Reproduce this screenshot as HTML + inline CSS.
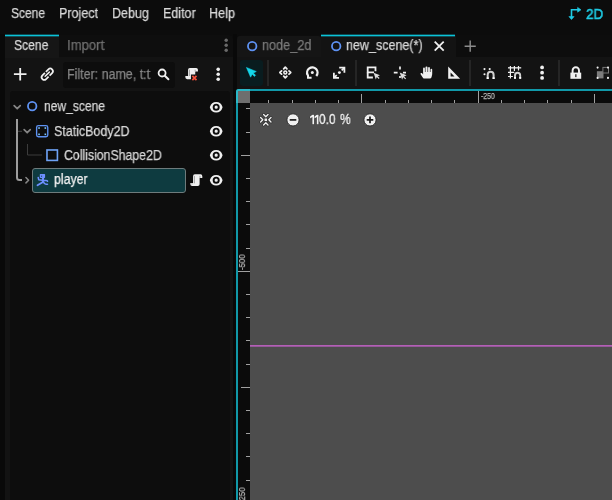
<!DOCTYPE html>
<html>
<head>
<meta charset="utf-8">
<title>Godot</title>
<style>
html,body{margin:0;padding:0;}
body{width:612px;height:500px;overflow:hidden;background:#0c0c0c;font-family:"Liberation Sans",sans-serif;position:relative;color:#dcdcdc;}
.a{position:absolute;}
.t{position:absolute;white-space:nowrap;will-change:transform;-webkit-text-stroke:.25px currentColor;font-size:14px;line-height:16px;color:#d8d8d8;transform-origin:0 50%;}
svg{position:absolute;overflow:visible;}
.sep{position:absolute;width:2px;background:#252525;top:60px;height:26px;}
.tick{position:absolute;background:#a0a0a0;}
</style>
</head>
<body>
<!-- menu bar -->
<div class="t" id="m1" style="left:10.5px;top:5px;transform:scaleX(0.857);">Scene</div>
<div class="t" id="m2" style="left:58.7px;top:5px;transform:scaleX(0.895);">Project</div>
<div class="t" id="m3" style="left:112.3px;top:5px;transform:scaleX(0.893);">Debug</div>
<div class="t" id="m4" style="left:162.5px;top:5px;transform:scaleX(0.894);">Editor</div>
<div class="t" id="m5" style="left:208.6px;top:5px;transform:scaleX(0.904);">Help</div>
<svg style="left:566px;top:5px;" width="18" height="18" viewBox="566 5 18 18"><path d="M571.5 17v-7.2h6.5" fill="none" stroke="#1fcbe4" stroke-width="1.6"/><path d="M577.6 7.4l3.4 2.4-3.4 2.4z" fill="#1fcbe4" stroke="#1fcbe4" stroke-width=".6" stroke-linejoin="round"/><path d="M568.9 16.6l2.6 3 2.6-3z" fill="#1fcbe4" stroke="#1fcbe4" stroke-width=".6" stroke-linejoin="round"/></svg>
<div class="t" id="m6" style="left:586px;top:5.5px;transform:scaleX(0.93);color:#1fcbe4;font-size:14.5px;-webkit-text-stroke:.55px #1fcbe4;">2D</div>
<!-- left dock -->
<div class="a" style="left:0px;top:34px;width:5px;height:466px;background:#090909;"></div>
<div class="a" style="left:233px;top:34px;width:4px;height:466px;background:#090909;"></div>
<div class="a" style="left:5px;top:35px;width:228px;height:22px;background:#0e0e0e;border-radius:4px 4px 0 0;"></div>
<div class="a" style="left:5px;top:56.5px;width:228px;height:444px;background:#131313;"></div>
<div class="a" style="left:5px;top:35px;width:54px;height:23px;background:#161616;border-radius:2px 2px 0 0;"></div>
<div class="a" style="left:5px;top:34px;width:54px;height:3px;background:#0bbfd4;opacity:.35;"></div>
<div class="a" style="left:5px;top:35px;width:54px;height:1px;background:#0bc3d8;"></div>
<div class="t" id="d1" style="left:14px;top:37px;transform:scaleX(0.865);">Scene</div>
<div class="t" id="d2" style="left:66.7px;top:37px;transform:scaleX(0.938);color:#6f6f6f;">Import</div>
<svg style="left:218.90px;top:38.30px;" width="14.4" height="14.4" viewBox="0 0 16 16"><g fill="#6a6a6a"><circle cx="8" cy="2.5" r="1.9"/><circle cx="8" cy="8" r="1.9"/><circle cx="8" cy="13.6" r="1.9"/></g></svg>
<div class="a" style="left:62.5px;top:61.5px;width:112.5px;height:26px;background:#0d0d0d;border-radius:3px;"></div>
<div class="t" id="f1" style="left:67.4px;top:66px;transform:scaleX(0.889);color:#858585;">Filter: name, t:t</div>
<div class="a" style="left:9.5px;top:91px;width:220px;height:420px;background:#0d0d0d;border-radius:3px;"></div>
<div class="a" style="left:32px;top:168px;width:152px;height:23px;background:#0e3b40;border:1px solid #6e7b7c;border-radius:3px;"></div>
<div class="t" id="n1" style="left:43.9px;top:98px;transform:scaleX(0.862);">new_scene</div>
<div class="t" id="n2" style="left:54px;top:122.5px;transform:scaleX(0.889);">StaticBody2D</div>
<div class="t" id="n3" style="left:64.3px;top:147px;transform:scaleX(0.878);">CollisionShape2D</div>
<div class="t" id="n4" style="left:54px;top:171px;transform:scaleX(0.881);color:#f2f2f2;">player</div>
<svg style="left:12.80px;top:67.00px;" width="14.4" height="14.4" viewBox="0 0 16 16"><path d="M8 1v14M1 8h14" stroke="#f0f0f0" stroke-width="2" fill="none"/></svg>
<svg style="left:40px;top:66px;" width="16" height="16" viewBox="40 66 16 16"><g transform="rotate(-45 47.25 74.2)"><rect x="40.4" y="71.6" width="13.7" height="5.2" rx="2.6" fill="none" stroke="#f0f0f0" stroke-width="1.7"/><path d="M47.25 70v8.4" stroke="#141414" stroke-width="1.3"/><path d="M44.3 74.2h5.9" stroke="#f0f0f0" stroke-width="1.5" stroke-linecap="round"/></g></svg>
<svg style="left:156px;top:66px;" width="16" height="16" viewBox="156 66 16 16"><circle cx="162.1" cy="73" r="3.5" fill="none" stroke="#f0f0f0" stroke-width="1.8"/><path d="M164.8 75.7l3.6 3.6" stroke="#f0f0f0" stroke-width="2" stroke-linecap="round"/></svg>
<svg style="left:184.20px;top:66.80px;" width="14.4" height="14.4" viewBox="0 0 16 16"><path fill="#f0f0f0" d="M6.5 1a2 2 0 0 0-2 2v7h-3v1.5a2 2 0 0 0 2 2h4.2V8.2h4.8V5h3V3a2 2 0 0 0-2-2z"/><path d="M6 3v7M12.4 3v2" stroke="#9a9a9a" stroke-width="1" fill="none"/><path d="M9.3 9.9l4.6 4.6M13.9 9.9l-4.6 4.6" stroke="#f2513c" stroke-width="2" fill="none"/></svg>
<svg style="left:210.60px;top:67.00px;" width="14.4" height="14.4" viewBox="0 0 16 16"><g fill="#f0f0f0"><circle cx="8" cy="2.6" r="2"/><circle cx="8" cy="8" r="2"/><circle cx="8" cy="13.6" r="2"/></g></svg>
<svg style="left:0px;top:90px;" width="240" height="110" viewBox="0 90 240 110"><path d="M17 119v58.5a2.5 2.5 0 0 0 2.5 2.5h2.5" fill="none" stroke="#9c9c9c" stroke-width="2"/><path d="M18 131.3h4" stroke="#454545" stroke-width="1" fill="none"/><path d="M27.5 144v11h14.5" fill="none" stroke="#3c3c3c" stroke-width="1"/></svg>
<svg style="left:9.60px;top:99.60px;" width="14.4" height="14.4" viewBox="0 0 16 16"><path d="M4.6 6.3l3.4 3.4 3.4-3.4" fill="none" stroke="#858585" stroke-width="1.9" stroke-linecap="round" stroke-linejoin="round"/></svg>
<svg style="left:19.70px;top:124.10px;" width="14.4" height="14.4" viewBox="0 0 16 16"><path d="M4.6 6.3l3.4 3.4 3.4-3.4" fill="none" stroke="#858585" stroke-width="1.9" stroke-linecap="round" stroke-linejoin="round"/></svg>
<svg style="left:20.00px;top:172.80px;" width="14.4" height="14.4" viewBox="0 0 16 16"><path d="M6.6 5l3 3-3 3" fill="none" stroke="#858585" stroke-width="1.7" stroke-linecap="round" stroke-linejoin="round"/></svg>
<svg style="left:24.80px;top:99.30px;" width="14.4" height="14.4" viewBox="0 0 16 16"><circle cx="8" cy="8" r="4.7" fill="none" stroke="#5e92f3" stroke-width="2"/></svg>
<svg style="left:35.00px;top:123.80px;" width="14.4" height="14.4" viewBox="0 0 16 16"><rect x="1.8" y="1.8" width="12.4" height="12.4" rx="2" fill="none" stroke="#5e92f3" stroke-width="1.5"/><g fill="#7cc4ff"><rect x="3.6" y="3.6" width="1.8" height="1.8"/><rect x="10.6" y="3.6" width="1.8" height="1.8"/><rect x="3.6" y="10.6" width="1.8" height="1.8"/><rect x="10.6" y="10.6" width="1.8" height="1.8"/></g></svg>
<svg style="left:45.20px;top:147.80px;" width="14.4" height="14.4" viewBox="0 0 16 16"><rect x="2.2" y="2.2" width="11.6" height="11.6" fill="none" stroke="#6ea2f5" stroke-width="1.8"/></svg>
<svg style="left:36px;top:172px;" width="14" height="16" viewBox="36 172 14 16"><rect x="39.8" y="174.1" width="5.3" height="3.8" rx=".6" fill="#6e90ff"/><rect x="41.1" y="175.7" width="1" height="1" fill="#0b3c41"/><g fill="none" stroke="#6e90ff" stroke-linecap="round" stroke-linejoin="round"><path d="M43 178v3.8" stroke-width="2.2"/><path d="M42.4 180.2l-3.7-.5-.5-2.2" stroke-width="1.5"/><path d="M43.6 180.5h2.2q1.6 0 1.8 .7" stroke-width="1.5"/><path d="M43.6 182q.5 2.2 2.4 2.3h1.5" stroke-width="1.5"/><path d="M42.6 182.2l-5.1 3.1" stroke-width="1.8"/></g></svg>
<svg style="left:208.90px;top:99.80px;" width="14.4" height="14.4" viewBox="0 0 16 16"><path fill="#f0f0f0" d="M8 2.2a7.3 7.3 0 0 0-6.9 5.3 1 1 0 0 0 0 1A7.3 7.3 0 0 0 8 13.8a7.3 7.3 0 0 0 6.9-5.3 1 1 0 0 0 0-1A7.3 7.3 0 0 0 8 2.2zm0 1.9a3.9 3.9 0 0 1 0 7.8 3.9 3.9 0 0 1 0-7.8zm0 2.1a1.8 1.8 0 0 0 0 3.6 1.8 1.8 0 0 0 0-3.6z"/></svg>
<svg style="left:208.90px;top:124.00px;" width="14.4" height="14.4" viewBox="0 0 16 16"><path fill="#f0f0f0" d="M8 2.2a7.3 7.3 0 0 0-6.9 5.3 1 1 0 0 0 0 1A7.3 7.3 0 0 0 8 13.8a7.3 7.3 0 0 0 6.9-5.3 1 1 0 0 0 0-1A7.3 7.3 0 0 0 8 2.2zm0 1.9a3.9 3.9 0 0 1 0 7.8 3.9 3.9 0 0 1 0-7.8zm0 2.1a1.8 1.8 0 0 0 0 3.6 1.8 1.8 0 0 0 0-3.6z"/></svg>
<svg style="left:208.90px;top:148.20px;" width="14.4" height="14.4" viewBox="0 0 16 16"><path fill="#f0f0f0" d="M8 2.2a7.3 7.3 0 0 0-6.9 5.3 1 1 0 0 0 0 1A7.3 7.3 0 0 0 8 13.8a7.3 7.3 0 0 0 6.9-5.3 1 1 0 0 0 0-1A7.3 7.3 0 0 0 8 2.2zm0 1.9a3.9 3.9 0 0 1 0 7.8 3.9 3.9 0 0 1 0-7.8zm0 2.1a1.8 1.8 0 0 0 0 3.6 1.8 1.8 0 0 0 0-3.6z"/></svg>
<svg style="left:208.90px;top:172.70px;" width="14.4" height="14.4" viewBox="0 0 16 16"><path fill="#f0f0f0" d="M8 2.2a7.3 7.3 0 0 0-6.9 5.3 1 1 0 0 0 0 1A7.3 7.3 0 0 0 8 13.8a7.3 7.3 0 0 0 6.9-5.3 1 1 0 0 0 0-1A7.3 7.3 0 0 0 8 2.2zm0 1.9a3.9 3.9 0 0 1 0 7.8 3.9 3.9 0 0 1 0-7.8zm0 2.1a1.8 1.8 0 0 0 0 3.6 1.8 1.8 0 0 0 0-3.6z"/></svg>
<svg style="left:188.80px;top:172.80px;" width="14.4" height="14.4" viewBox="0 0 16 16"><path fill="#f0f0f0" d="M6.5 1.5a2 2 0 0 0-2 2v7.5h-3v1.5a2 2 0 0 0 2 2h6.3a2 2 0 0 0 2-2V5.5h3V3.5a2 2 0 0 0-2-2z"/><path d="M6 3.3v8.2M12.2 3.2v2.3M3.3 11.3v1.4" stroke="#9a9a9a" stroke-width="1" fill="none"/></svg>
<!-- scene tabs -->
<div class="a" style="left:236.5px;top:35px;width:380px;height:22px;background:#0d0d0d;border-radius:4px 0 0 0;"></div>
<div class="a" style="left:236.5px;top:56.5px;width:380px;height:34px;background:#131313;"></div>
<div class="a" style="left:237px;top:36px;width:83.5px;height:20.5px;background:#151515;border-radius:3px 3px 0 0;"></div>
<div class="a" style="left:320.5px;top:35px;width:135px;height:22px;background:#131313;"></div>
<div class="a" style="left:320.5px;top:34px;width:134.5px;height:3px;background:#0bbfd4;opacity:.35;"></div>
<div class="a" style="left:320.5px;top:35px;width:134.5px;height:1px;background:#0bc3d8;"></div>
<div class="t" id="s1" style="left:262px;top:37px;transform:scaleX(0.906);color:#7a7a7a;">node_2d</div>
<div class="t" id="s2" style="left:345.9px;top:37px;transform:scaleX(0.895);">new_scene(*)</div>
<svg style="left:245.30px;top:38.80px;" width="14.4" height="14.4" viewBox="0 0 16 16"><circle cx="8" cy="8" r="4.7" fill="none" stroke="#5e92f3" stroke-width="2"/></svg>
<svg style="left:329.00px;top:38.80px;" width="14.4" height="14.4" viewBox="0 0 16 16"><circle cx="8" cy="8" r="4.7" fill="none" stroke="#5e92f3" stroke-width="2"/></svg>
<svg style="left:432.10px;top:38.80px;" width="14.4" height="14.4" viewBox="0 0 16 16"><path d="M3 3l10 10M13 3L3 13" stroke="#f0f0f0" stroke-width="2" fill="none"/></svg>
<svg style="left:463.00px;top:38.90px;" width="14.4" height="14.4" viewBox="0 0 16 16"><path d="M8 1.8v12.4M1.8 8h12.4" stroke="#8c8c8c" stroke-width="1.6" fill="none"/></svg>
<!-- toolbar -->
<div class="a" style="left:240px;top:60px;width:23px;height:25.5px;background:#091c1f;border-radius:3px;"></div>
<div class="sep" style="left:267px;"></div>
<div class="sep" style="left:354.7px;"></div>
<div class="sep" style="left:469.4px;"></div>
<div class="sep" style="left:557.6px;"></div>
<svg style="left:236px;top:58px;" width="376" height="32" viewBox="236 58 376 32"><path fill="#14d6ea" stroke="#14d6ea" stroke-width=".5" stroke-linejoin="round" d="M246.4 67.4l9.9 4.1-2.9 1.6 2.2 2.2-1.2 1.2-2.2-2.2-1.6 2.9z"/><g fill="none" stroke="#f0f0f0" stroke-width="1.8" stroke-linecap="round" stroke-linejoin="round"><path d="M283.70 68.80l1.6-1.7 1.6 1.7"/><path d="M283.70 76.20l1.6 1.7 1.6-1.7"/><path d="M281.60 70.90l-1.7 1.6 1.7 1.6"/><path d="M289.00 70.90l1.7 1.6-1.7 1.6"/></g><circle cx="285.3" cy="72.5" r="1.45" fill="none" stroke="#f0f0f0" stroke-width="1.6"/><path d="M316.28 75.94A5.2 5.2 0 1 0 307.71 75.04" fill="none" stroke="#f0f0f0" stroke-width="2.3" stroke-linecap="butt"/><path d="M308 74.6v3.1h3.6" fill="none" stroke="#f0f0f0" stroke-width="2"/><circle cx="312.3" cy="72.6" r="1.5" fill="#f0f0f0"/><g fill="none" stroke="#f0f0f0" stroke-width="1.8" stroke-linejoin="miter"><path d="M339.2 67.7h5.2v5.1"/><path d="M333.9 72.8v5.1h5.1"/><path d="M344.2 67.9l-2.5 2.5M334.1 77.7l2.6-2.6" stroke-width="1.7"/></g><circle cx="339.4" cy="72.6" r="1.45" fill="#f0f0f0"/><g fill="none" stroke="#f0f0f0" stroke-width="1.8"><path d="M374 72.4h-6.3v-5h7.8v3.8"/><path d="M367.7 72.4v5.1h5.2"/></g><path fill="#dcdcdc" d="M373.6 72.8l6.4 2.4-2.3 1 1.9 1.9-.9.9-1.9-1.9-1 2.3z"/><g stroke="#f0f0f0" stroke-width="1.7" fill="none"><path d="M400 66.6v2.8M393.8 72.6h3.8M403 72.6h3M400 76v2"/></g><path fill="#dcdcdc" d="M399.7 72.6l6.9 2.7-2.5 1.1 2 2-.9.9-2-2-1.1 2.5z"/><path fill="#f0f0f0" d="M426.4 66.6a.9.9 0 0 0-.9.9v4.4h-.6v-3.5a.9.9 0 0 0-1.8 0v6.2l-.9-1.3a.95.95 0 0 0-1.6 1l2.3 3.4a1.9 1.9 0 0 0 1.6.9h5.2a1.9 1.9 0 0 0 1.8-1.4l.7-3v-4.6a.85.85 0 0 0-1.7 0v2.3h-.6v-4a.9.9 0 0 0-1.8 0v4h-.6v-4.4a.9.9 0 0 0-.9-.9z"/><path fill="#f0f0f0" fill-rule="evenodd" d="M448.2 66.6v12.2h11.9zM450.6 72.6l3.9 4h-3.9z"/><g fill="#f0f0f0"><circle cx="484.5" cy="69.1" r="1.05"/><circle cx="489.7" cy="69.1" r="1.05"/><circle cx="484.5" cy="74.3" r="1.05"/></g><path d="M487.7 79v-4.2a2.95 2.95 0 0 1 5.9 0V79" fill="none" stroke="#d0d0d0" stroke-width="2"/><path d="M486.7 78.2h2M492.6 78.2h2" stroke="#ffffff" stroke-width="1.7"/><path d="M508 67.8h13.2" stroke="#c4c4c4" stroke-width="1.6" fill="none"/><g stroke="#f0f0f0" stroke-width="1.2" fill="none"><path d="M510.4 66v12.6M514.4 66v5M518.5 66v4.4M508 72.3h6.3M508 76.5h4.9"/></g><path d="M515 78.7v-3.3a2.6 2.6 0 0 1 5.2 0v3.3" fill="none" stroke="#d0d0d0" stroke-width="1.9"/><path d="M514.05 77.9h1.9M519.25 77.9h1.9" stroke="#ffffff" stroke-width="1.7"/><g fill="#f0f0f0"><circle cx="542.1" cy="67.4" r="1.9"/><circle cx="542.1" cy="72.7" r="1.9"/><circle cx="542.1" cy="77.9" r="1.9"/></g><path d="M572.6 73v-2.6a3.2 3.2 0 0 1 6.4 0V73" fill="none" stroke="#f0f0f0" stroke-width="1.9"/><rect x="570.4" y="72.6" width="10.8" height="6.2" fill="#f0f0f0"/><rect x="575.2" y="74.2" width="1.3" height="2.9" fill="#222"/><rect x="596.9" y="71.2" width="6.6" height="7.2" fill="#7d7d7d"/><rect x="602.9" y="67.4" width="5.6" height="5.6" fill="#161616" stroke="#777" stroke-width="1"/><g fill="#f0f0f0"><circle cx="597.6" cy="67.6" r="1.05"/><circle cx="608" cy="67.6" r="1.05"/><circle cx="597.6" cy="77.9" r="1.05"/><circle cx="608" cy="77.9" r="1.05"/></g></svg>
<!-- viewport -->
<div class="a" style="left:236px;top:89px;width:380px;height:420px;background:#0b0b0b;border:2px solid #1199a9;border-radius:3px 0 0 0;box-sizing:border-box;"></div>
<div class="a" style="left:236px;top:89px;width:14px;height:14px;background:transparent;border:2px solid #2ab8c8;border-right:none;border-bottom:none;border-radius:3px 0 0 0;box-sizing:border-box;"></div>
<div class="a" style="left:238px;top:91px;width:12px;height:12px;background:#6e6e6e;"></div>
<div class="a" style="left:250px;top:103px;width:362px;height:397px;background:#4d4d4d;"></div>
<div class="a" style="left:250px;top:345px;width:362px;height:1px;background:#b45fb7;"></div>
<div class="a" style="left:250px;top:346px;width:362px;height:1px;background:#96589a;"></div>
<div class="tick" style="left:268px;top:100px;width:1px;height:3px;"></div><div class="tick" style="left:292px;top:100px;width:1px;height:3px;"></div><div class="tick" style="left:315px;top:100px;width:1px;height:3px;"></div><div class="tick" style="left:338px;top:100px;width:1px;height:3px;"></div><div class="tick" style="left:361px;top:94px;width:1px;height:9px;"></div><div class="tick" style="left:385px;top:100px;width:1px;height:3px;"></div><div class="tick" style="left:408px;top:100px;width:1px;height:3px;"></div><div class="tick" style="left:431px;top:100px;width:1px;height:3px;"></div><div class="tick" style="left:454px;top:100px;width:1px;height:3px;"></div><div class="tick" style="left:478px;top:91px;width:1px;height:12px;"></div><div class="tick" style="left:501px;top:100px;width:1px;height:3px;"></div><div class="tick" style="left:524px;top:100px;width:1px;height:3px;"></div><div class="tick" style="left:547px;top:100px;width:1px;height:3px;"></div><div class="tick" style="left:571px;top:100px;width:1px;height:3px;"></div><div class="tick" style="left:594px;top:94px;width:1px;height:9px;"></div><div class="tick" style="top:108px;left:246px;height:1px;width:4px;"></div><div class="tick" style="top:132px;left:246px;height:1px;width:4px;"></div><div class="tick" style="top:155px;left:241px;height:1px;width:9px;"></div><div class="tick" style="top:178px;left:246px;height:1px;width:4px;"></div><div class="tick" style="top:201px;left:246px;height:1px;width:4px;"></div><div class="tick" style="top:224px;left:246px;height:1px;width:4px;"></div><div class="tick" style="top:248px;left:246px;height:1px;width:4px;"></div><div class="tick" style="top:271px;left:238px;height:1px;width:12px;"></div><div class="tick" style="top:294px;left:246px;height:1px;width:4px;"></div><div class="tick" style="top:317px;left:246px;height:1px;width:4px;"></div><div class="tick" style="top:340px;left:246px;height:1px;width:4px;"></div><div class="tick" style="top:364px;left:246px;height:1px;width:4px;"></div><div class="tick" style="top:387px;left:241px;height:1px;width:9px;"></div><div class="tick" style="top:410px;left:246px;height:1px;width:4px;"></div><div class="tick" style="top:433px;left:246px;height:1px;width:4px;"></div><div class="tick" style="top:456px;left:246px;height:1px;width:4px;"></div><div class="tick" style="top:480px;left:246px;height:1px;width:4px;"></div>
<div class="t" id="r1" style="left:480.6px;top:91px;font-size:8.5px;line-height:10px;color:#b8b8b8;transform:scaleX(.81);">-250</div>
<div class="t" id="r2" style="left:236.8px;top:260px;font-size:8.5px;line-height:10px;color:#b0b0b0;transform-origin:0 0;transform:translate(0,10px) rotate(-90deg) scaleX(.92);">-500</div>
<div class="t" id="r3" style="left:236.8px;top:493px;font-size:8.5px;line-height:10px;color:#b0b0b0;transform-origin:0 0;transform:translate(0,10px) rotate(-90deg) scaleX(.92);">-250</div>
<svg style="left:255px;top:110px;" width="125" height="20" viewBox="255 110 125 20"><path d="M263.6 114.6l2.2 2.2 2.2-2.2M263.6 125.0l2.2-2.2 2.2 2.2M260.6 117.6l2.2 2.2-2.2 2.2M271.0 117.6l-2.2 2.2 2.2 2.2" fill="none" stroke="#2c2c2c" stroke-width="2.8" stroke-linecap="round" stroke-linejoin="round"/><rect x="263.90000000000003" y="117.89999999999999" width="3.8" height="3.8" fill="#2c2c2c"/><path d="M263.6 114.6l2.2 2.2 2.2-2.2M263.6 125.0l2.2-2.2 2.2 2.2M260.6 117.6l2.2 2.2-2.2 2.2M271.0 117.6l-2.2 2.2 2.2 2.2" fill="none" stroke="#f0f0f0" stroke-width="1.4" stroke-linecap="round" stroke-linejoin="round"/><rect x="264.5" y="118.5" width="2.6" height="2.6" fill="#f0f0f0"/><circle cx="293" cy="119.9" r="6.1" fill="#f0f0f0" stroke="#262626" stroke-width=".9"/><path d="M289.7 119.9h6.6" stroke="#1c1c1c" stroke-width="1.7"/><circle cx="370" cy="119.9" r="6.1" fill="#f0f0f0" stroke="#262626" stroke-width=".9"/><path d="M366.7 119.9h6.6M370 116.6v6.6" stroke="#1c1c1c" stroke-width="1.7"/></svg>
<svg style="left:305px;top:110px;" width="20" height="20" viewBox="305 110 20 20"><g fill="#f2f2f2" stroke="#2e2e2e" stroke-width=".7" paint-order="stroke"><path d="M312.4 114.8h1.7v9.4h-1.7v-7.3l-2.3 1.5v-1.8l2.3-1.8z"/><path d="M316.8 114.8h1.7v9.4h-1.7v-7.3l-2.3 1.5v-1.8l2.3-1.8z"/></g></svg>
<div class="t" id="z1" style="left:318.7px;top:111px;transform:scaleX(0.85);color:#f2f2f2;text-shadow:0 0 1px #222,0 0 1px #222;-webkit-text-stroke:.4px #f2f2f2;word-spacing:1.5px;">0.0 %</div>
</body>
</html>
